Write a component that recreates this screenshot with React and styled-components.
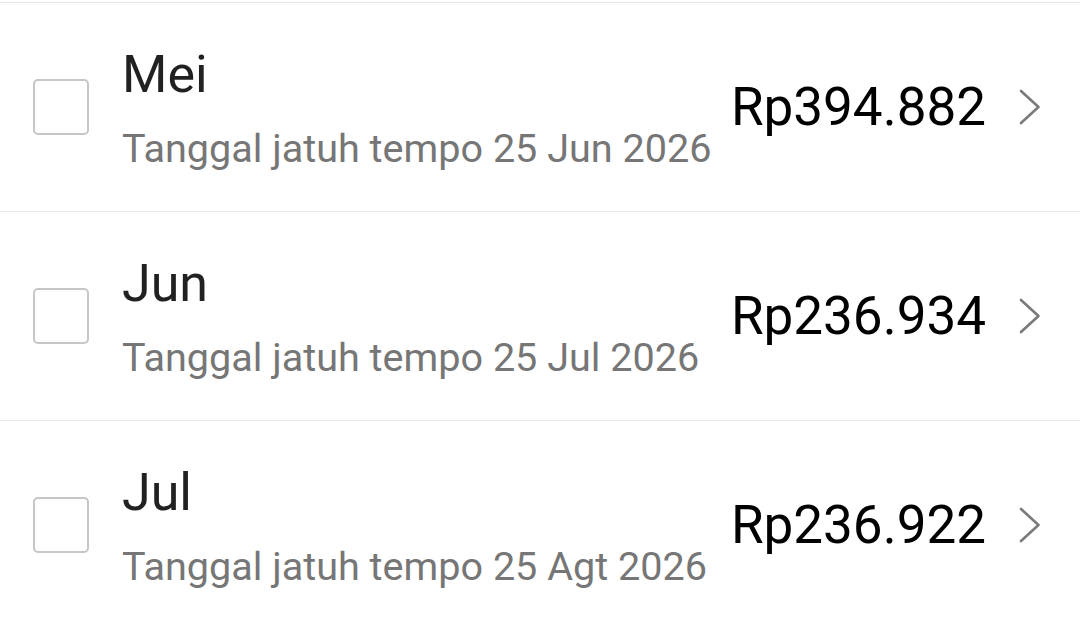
import styled, { createGlobalStyle } from "styled-components";

const GlobalStyle = createGlobalStyle`
  * { box-sizing: border-box; }
  body {
    margin: 0;
    background: #fff;
    font-family: Roboto, "Liberation Sans", sans-serif;
  }
`;

const bills = [
  { month: "Mei", due: "25 Jun 2026", amount: "Rp394.882" },
  { month: "Jun", due: "25 Jul 2026", amount: "Rp236.934" },
  { month: "Jul", due: "25 Agt 2026", amount: "Rp236.922" },
];

function App() {
  return (
    <>
      <GlobalStyle />
      <List>
        {bills.map((bill) => (
          <Row key={bill.month}>
            <Checkbox />
            <Info>
              <Month>{bill.month}</Month>
              <Due>Tanggal jatuh tempo {bill.due}</Due>
            </Info>
            <Amount>{bill.amount}</Amount>
            <Chevron viewBox="0 0 24 36" width="24" height="36">
              <path d="M3 2 L20.5 18 L3 34" fill="none" stroke="#7a7a7a" strokeWidth="2.6" strokeLinecap="round" strokeLinejoin="round" />
            </Chevron>
          </Row>
        ))}
      </List>
    </>
  );
}

export default App;

const List = styled.main`
  width: 1080px;
  height: 627px;
  padding-top: 2px;
  background: #fff;
  overflow: hidden;
`;

const Row = styled.section`
  height: 209px;
  border-top: 1px solid #e6e6e6;
  display: flex;
  align-items: center;
  padding: 0 38px 0 33px;
`;

const Checkbox = styled.div`
  width: 56px;
  height: 56px;
  flex-shrink: 0;
  border: 2.5px solid #c6c6c6;
  border-radius: 5px;
  margin-right: 33px;
`;

const Info = styled.div`
  flex: 1;
  display: flex;
  flex-direction: column;
  padding-top: 4px;
`;

const Month = styled.h2`
  margin: 0;
  font-size: 52px;
  line-height: 60px;
  font-weight: 400;
  color: #212121;
`;

const Due = styled.p`
  margin: 20px 0 0;
  font-size: 39.6px;
  line-height: 48px;
  color: #767676;
  white-space: nowrap;
`;

const Amount = styled.span`
  font-size: 53px;
  line-height: 60px;
  color: #000;
  white-space: nowrap;
`;

const Chevron = styled.svg`
  flex-shrink: 0;
  margin-left: 32px;
`;
